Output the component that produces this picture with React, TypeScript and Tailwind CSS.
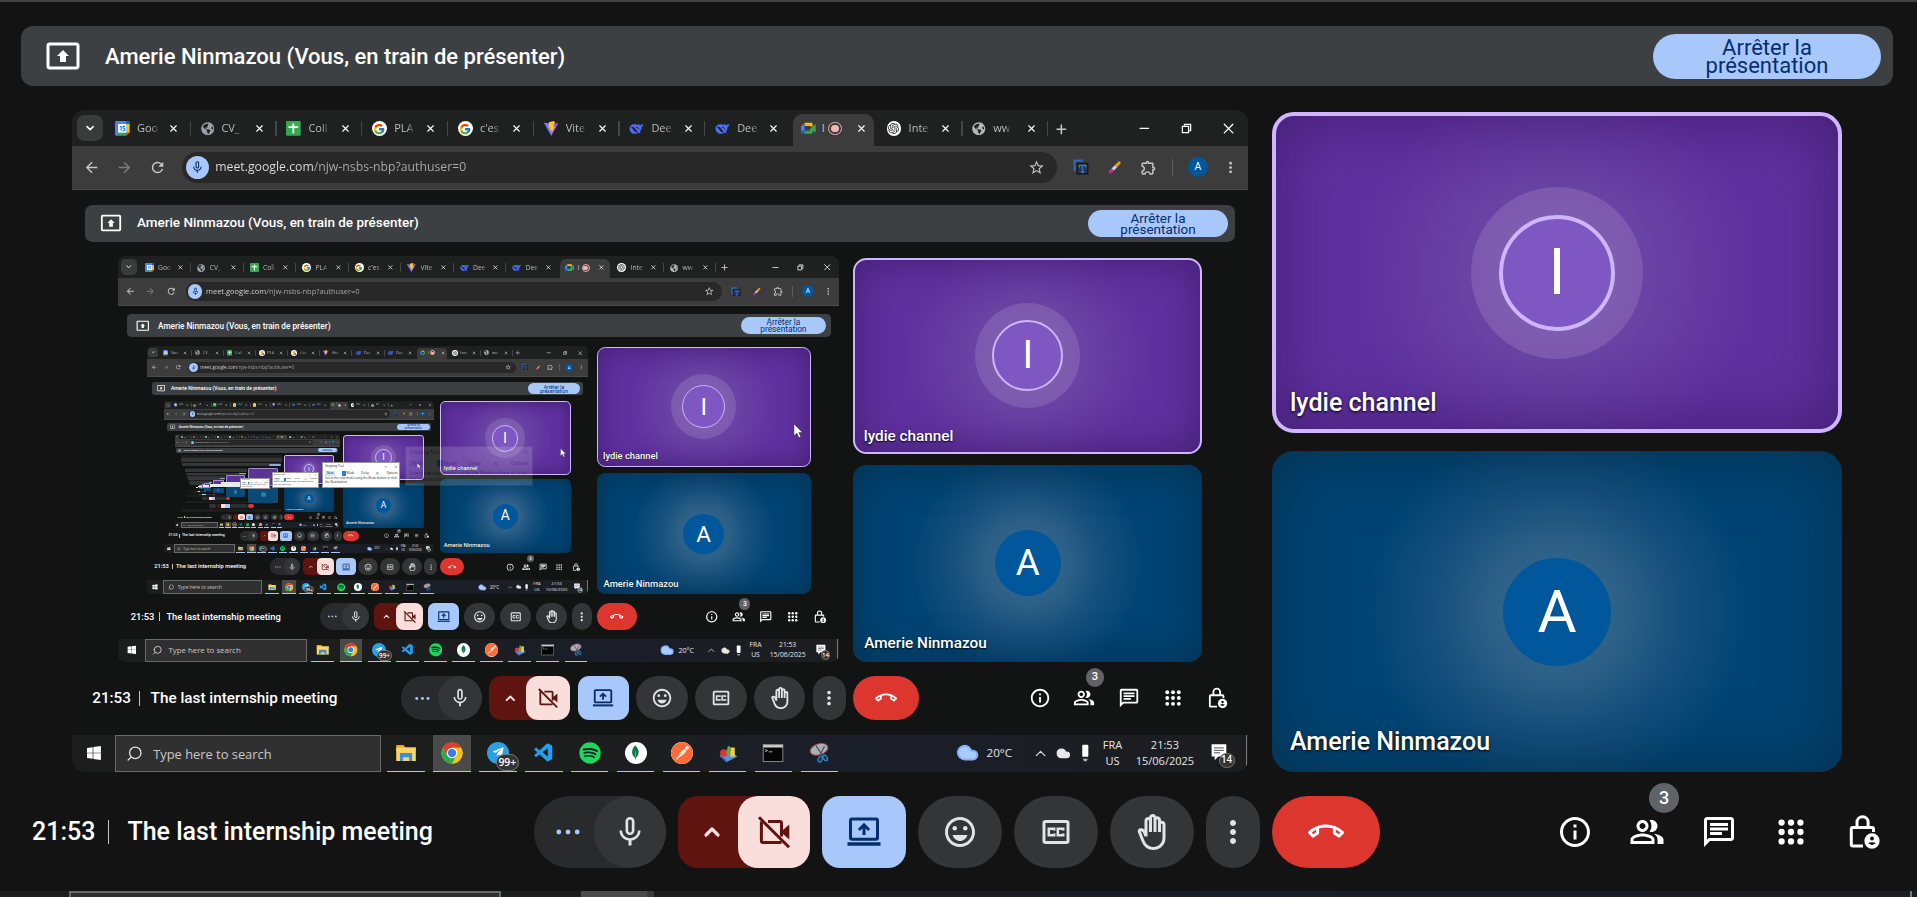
import type { ReactNode } from 'react';
import {
  MdArrowBack,
  MdArrowForward,
  MdMicNone,
  MdMoreVert,
  MdOutlineBackHand,
  MdOutlineCallEnd,
  MdOutlineChat,
  MdOutlineEmojiEmotions,
  MdOutlineExtension,
  MdOutlineInfo,
  MdOutlinePeopleAlt,
  MdRefresh,
  MdStarOutline,
} from 'react-icons/md';
import { FaGlobeAmericas, FaSpotify, FaTelegramPlane, FaWindows } from 'react-icons/fa';
import { FcGoogle } from 'react-icons/fc';
import { SiMongodb, SiOpenai, SiPostman } from 'react-icons/si';
import { VscVscode } from 'react-icons/vsc';
import { ChevronDown, ChevronUp, Cloud, Minus, Plus, Search, X } from 'lucide-react';

/* Desktops deeper than DETAIL_DEPTH are too small to read and are drawn as plain blocks. */
const DETAIL_DEPTH = 5;
const MAX_DEPTH = 10;

/* ---------- icons ---------- */

function PresentIcon({ className }: { className?: string }) {
  return (
    <svg viewBox="0 0 24 24" fill="currentColor" className={className} aria-hidden="true">
      <path d="M21 3H3c-1.11 0-2 .89-2 2v14c0 1.11.89 2 2 2h18c1.11 0 2-.89 2-2V5c0-1.11-.89-2-2-2zm0 16.02H3V4.98h18v14.04zM10 12H8l4-4 4 4h-2v4h-4v-4z" />
    </svg>
  );
}

function LaptopShareIcon({ className }: { className?: string }) {
  return (
    <svg viewBox="0 0 24 24" fill="none" stroke="currentColor" className={className} aria-hidden="true">
      <rect x="3" y="3.4" width="18" height="13.4" rx="1" strokeWidth="2" />
      <path d="M1 20h22" strokeWidth="2.2" />
      <path d="M12 14V8" strokeWidth="2" />
      <path d="M8.6 10.6 12 7.2l3.4 3.4" strokeWidth="1.9" />
    </svg>
  );
}

function CameraOffIcon({ className }: { className?: string }) {
  return (
    <svg viewBox="0 0 24 24" fill="none" stroke="currentColor" strokeWidth="2" className={className} aria-hidden="true">
      <path d="M3.6 5v13a1 1 0 0 0 1 1H17" />
      <path d="M8 5h8a1 1 0 0 1 1 1v9" />
      <path d="M17 11.5 22.2 7v10L17 12.5z" fill="currentColor" stroke="none" />
      <path d="M2 2.2 22 22.2" />
    </svg>
  );
}

function CaptionsIcon({ className }: { className?: string }) {
  return (
    <svg viewBox="0 0 24 24" fill="none" stroke="currentColor" className={className} aria-hidden="true">
      <rect x="4" y="5" width="16" height="14" rx="1" strokeWidth="2" />
      <path d="M10.8 11V9.8H7.2v4.4h3.6V13M16.8 11V9.800h-3.600v4.400h3.600V13" strokeWidth="1.7" />
    </svg>
  );
}

function DotsIcon({ className }: { className?: string }) {
  return (
    <svg viewBox="0 0 24 24" fill="currentColor" className={className} aria-hidden="true">
      <circle cx="5.5" cy="12" r="1.700" />
      <circle cx="12" cy="12" r="1.700" />
      <circle cx="18.5" cy="12" r="1.700" />
    </svg>
  );
}

const gridStops = [5.7, 12, 18.3];

function AppsIcon({ className }: { className?: string }) {
  return (
    <svg viewBox="0 0 24 24" fill="currentColor" className={className} aria-hidden="true">
      {gridStops.map((y) => gridStops.map((x) => <circle key={`${x}-${y}`} cx={x} cy={y} r="2.1" />))}
    </svg>
  );
}

function HostLockIcon({ className }: { className?: string }) {
  return (
    <svg viewBox="0 0 24 24" fill="none" stroke="currentColor" className={className} aria-hidden="true">
      <path d="M12 21.4H5.200a1 1 0 0 1-1-1V10a1 1 0 0 1 1-1H18a1 1 0 0 1 1 1v2" strokeWidth="2" />
      <path d="M8 9V5.500a3.700 3.700 0 0 1 7.400 0V9" strokeWidth="2" />
      <circle cx="18" cy="18" r="5.100" fill="currentColor" stroke="none" />
      <circle cx="18" cy="16.300" r="1.300" fill="#131313" stroke="none" />
      <path d="M15.400 19.400a3.400 1.800 0 0 1 5.200 0 3.400 3.400 0 0 1-5.200 0z" fill="#131313" stroke="none" />
    </svg>
  );
}

function RestoreIcon({ className }: { className?: string }) {
  return (
    <svg viewBox="0 0 16 16" fill="none" stroke="currentColor" strokeWidth="1.8" className={className} aria-hidden="true">
      <path d="M2 5h9v9H2z" />
      <path d="M5 4V2h9v9h-2" />
    </svg>
  );
}

function CalendarLogo() {
  return (
    <svg viewBox="0 0 24 24" className="size-6" aria-hidden="true">
      <path d="M0 2a2 2 0 0 1 2-2h17v5H0z" fill="#4285f4" />
      <path d="M0 5h5v19H2a2 2 0 0 1-2-2z" fill="#4285f4" />
      <path d="M19 0h3a2 2 0 0 1 2 2v3h-5z" fill="#1967d2" />
      <path d="M19 5h5v14h-5z" fill="#fbbc04" />
      <path d="M5 19h14v5H5z" fill="#34a853" />
      <path d="M19 19h5l-5 5z" fill="#ea4335" />
      <path d="M5 5h14v14H5z" fill="#fff" />
      <path d="M8 9h2v7M16.500 8.800h-3.300v2.800c3.700-.6 4.200 4 .3 4.200h-1" fill="none" stroke="#1a73e8" strokeWidth="1.700" />
    </svg>
  );
}

function SheetsLogo() {
  return (
    <svg viewBox="0 0 24 24" className="size-6" aria-hidden="true">
      <rect width="24" height="24" rx="2" fill="#34a853" />
      <path d="M12 4v16M4 10h16" stroke="#fff" strokeWidth="3" />
    </svg>
  );
}

function ViteLogo() {
  return (
    <svg viewBox="0 0 24 24" className="size-6" aria-hidden="true">
      <path d="M0 3 12 24 24 3 12 5z" fill="#a34dfb" />
      <path d="M0 3 12 24V5z" fill="#6a7bff" />
      <path d="m16 0-8 2-.6 9 3-.6-1 5 3-.8-.4 6 6-12-3.400.700L18 2z" fill="#ffc820" />
    </svg>
  );
}

function DeepSeekLogo() {
  return (
    <svg viewBox="0 0 24 24" className="size-6" aria-hidden="true">
      <path
        d="M23.500 5.500c-1 .4-1.800 0-2.600-.8-.5 1-.5 1.800-1.700 2.200-.8.200-1.500 0-2.200-.6-.7-.7-1.600-1.600-1.200-2.900-1.200 1.200-.6 3.200.6 4.300-3-2-9.300-3.800-13.400-.2C-1 11 .300 20.500 9.500 21c2.300.1 4.500-.6 6.200-1.900 1.400.9 3 .9 3.900.2-.9-.3-1.500-.9-1.800-1.700 2.300-2.700 2.900-5.500 2.800-8.200 1.700-.3 2.800-1.700 2.900-3.900z"
        fill="#4d6bfe"
      />
      <path d="M3.500 9.500c3.500-.5 7 2.500 8.500 5.500 1 2 2.500 3.300 3.800 3.600-4.300.6-6.800-1-8.300-3.800C6.500 12.800 5 11.500 3.500 11z" fill="#1f2020" />
      <path d="M11.500 10.500c1.800-.8 4.500.6 4.600 3.600" stroke="#1f2020" strokeWidth="1.500" fill="none" />
    </svg>
  );
}

function MeetLogo() {
  return (
    <svg viewBox="0 0 24 24" className="size-6" aria-hidden="true">
      <path d="M6 3h11a2 2 0 0 1 2 2v4h-4V8H6z" fill="#fbbc04" />
      <path d="M6 3v5H0z" fill="#ea4335" />
      <path d="M0 8h6v8H0z" fill="#4285f4" />
      <path d="M0 16h6v5H2a2 2 0 0 1-2-2z" fill="#1967d2" />
      <path d="M6 16h8v-2l5-5 5-4v14l-5-3v3a2 2 0 0 1-2 2H6z" fill="#34a853" />
    </svg>
  );
}

function ChromeLogo() {
  return (
    <svg viewBox="0 0 48 48" className="size-9" aria-hidden="true">
      <circle cx="24" cy="24" r="23" fill="#fbc116" />
      <path d="M4.080 12.500A23 23 0 0 1 43.920 12.500H24L14 29.800z" fill="#e33b2e" />
      <path d="M4.080 12.500A23 23 0 0 0 24 47L34 29.750 14 29.750z" fill="#2da94f" />
      <path d="M24 12.500h19.920A23 23 0 0 1 24 47l10-17.250z" fill="#fbc116" />
      <circle cx="24" cy="24" r="11.500" fill="#fff" />
      <circle cx="24" cy="24" r="9" fill="#3a7cec" />
    </svg>
  );
}

function ExplorerLogo() {
  return (
    <svg viewBox="0 0 36 36" className="size-9" aria-hidden="true">
      <path d="M2 5h12l3 4h17v6H2z" fill="#e8a824" />
      <path d="M2 9h32v22H2z" fill="#fcd462" />
      <path d="M8 18h20v13h-5v-6H13v6H8z" fill="#3b8fd8" />
    </svg>
  );
}

function ChartsLogo() {
  return (
    <svg viewBox="0 0 36 36" className="size-9" aria-hidden="true">
      <path d="m4 22 20-8 9 10-18 9z" fill="#5b8fe0" />
      <path d="m4 22 11 11v-4z" fill="#2f5cab" />
      <circle cx="11" cy="18" r="6" fill="#e0342c" />
      <path d="m15 18 3-12 4 2-2 14z" fill="#58b53c" />
      <path d="M22 9h7v15h-7z" fill="#f2cf3a" />
    </svg>
  );
}

function TerminalLogo() {
  return (
    <svg viewBox="0 0 36 36" className="size-9" aria-hidden="true">
      <rect x="2" y="4" width="32" height="28" fill="#050505" stroke="#8f8f8f" strokeWidth="1.500" />
      <path d="M2 5h32v4H2z" fill="#cfcfcf" />
      <path d="m5 12 4 2-4 2M11 16h6" stroke="#d0d0d0" strokeWidth="1.300" fill="none" />
    </svg>
  );
}

function SnipLogo() {
  return (
    <svg viewBox="0 0 36 36" className="size-9" aria-hidden="true">
      <ellipse cx="18" cy="12" rx="15" ry="9" transform="rotate(-18 18 12)" fill="#a9afb5" stroke="#a04444" strokeWidth="1.500" />
      <path d="m13 6 10 15M27 7l-8 15" stroke="#4e5459" strokeWidth="2" />
      <ellipse cx="20" cy="28" rx="3" ry="5" transform="rotate(25 20 28)" fill="none" stroke="#2c7fb8" strokeWidth="2.500" />
      <ellipse cx="28" cy="26" rx="3" ry="5" transform="rotate(-35 28 26)" fill="none" stroke="#2c7fb8" strokeWidth="2.500" />
    </svg>
  );
}

function TranslateLogo() {
  return (
    <svg viewBox="0 0 30 30" className="size-[26px]" aria-hidden="true">
      <path d="M1 1h18v4H5v18H1z" fill="#2f62c4" />
      <path d="M8 8h20v20H8z" fill="#2d3648" stroke="#101010" strokeWidth="2" />
      <path d="M12 12h12v4M12 12v4M18 12v13M15 25h6" stroke="#3b73dd" strokeWidth="2.500" fill="none" />
    </svg>
  );
}

function BrushLogo() {
  return (
    <svg viewBox="0 0 26 26" className="size-6" aria-hidden="true">
      <path d="m14 9 6-6c2-2 5 0 4 3l-6 7z" fill="#f7931e" />
      <path d="m8 15 6-6 4 4-6 6z" fill="#b8d4f0" />
      <path d="M3 24c0-4 1-7 5-9l4 4c-2 4-5 5-9 5z" fill="#c2327a" />
    </svg>
  );
}

/* ---------- browser window ---------- */

function GoogleBadge() {
  return (
    <span className="flex size-6 items-center justify-center rounded-full bg-white">
      <FcGoogle className="size-5" />
    </span>
  );
}

const tabs: { title: string; icon: ReactNode; active?: boolean }[] = [
  { title: 'Goo', icon: <CalendarLogo /> },
  { title: 'CV_', icon: <FaGlobeAmericas className="size-[22px] text-[#9aa0a6]" /> },
  { title: 'Coll', icon: <SheetsLogo /> },
  { title: 'PLA', icon: <GoogleBadge /> },
  { title: "c'es", icon: <GoogleBadge /> },
  { title: 'Vite', icon: <ViteLogo /> },
  { title: 'Dee', icon: <DeepSeekLogo /> },
  { title: 'Dee', icon: <DeepSeekLogo /> },
  { title: 'I', icon: <MeetLogo />, active: true },
  {
    title: 'Inte',
    icon: (
      <span className="flex size-6 items-center justify-center rounded-full bg-white">
        <SiOpenai className="size-[18px] text-[#222]" />
      </span>
    ),
  },
  { title: 'ww', icon: <FaGlobeAmericas className="size-[22px] text-[#b8b8b8]" /> },
];

function TabStrip() {
  return (
    <div className="flex h-[58px] shrink-0 items-end bg-[#1f2120] pl-2 text-[#c7c7c7]">
      <button aria-label="Search tabs" className="mb-2 flex size-[42px] items-center justify-center rounded-xl bg-[#3a3b3b]">
        <ChevronDown className="size-5 text-white" strokeWidth={3} />
      </button>
      <div className="flex pl-1">
        {tabs.map((tab, i) =>
          tab.active ? (
            <div key={i} className="mr-1 ml-1 flex h-[51px] w-[132px] items-center rounded-t-2xl bg-[#3c3c3c] px-3 pb-1">
              {tab.icon}
              <span className="ml-2.5 text-[18px]">{tab.title}</span>
              <span className="ml-1.5 flex size-[22px] items-center justify-center rounded-full border-2 border-[#e8b4ae]">
                <span className="size-3 rounded-full bg-[#f2b8b5]" />
              </span>
              <button aria-label="Close tab" className="ml-auto text-white">
                <X className="size-[18px]" strokeWidth={2.5} />
              </button>
            </div>
          ) : (
            <div key={i} className="flex h-[51px] w-[140px] items-center pb-1 pl-4">
              {tab.icon}
              <span className="ml-3 bg-[linear-gradient(90deg,#c7c7c7_65%,#c7c7c740)] bg-clip-text text-[18px] whitespace-nowrap text-transparent">
                {tab.title}
              </span>
              <button aria-label="Close tab" className="ml-auto text-white">
                <X className="size-[18px]" strokeWidth={2.5} />
              </button>
              <span className={tabs[i + 1]?.active ? 'ml-[17px] w-[2px]' : 'ml-[17px] h-6 w-[2px] bg-[#454746]'} />
            </div>
          ),
        )}
      </div>
      <button aria-label="New tab" className="mb-[15px] ml-[10px]">
        <Plus className="size-6" strokeWidth={2.5} />
      </button>
      <div className="mb-[14px] ml-auto flex items-center gap-[47px] pr-[17px] text-white">
        <button aria-label="Minimize">
          <Minus className="size-6" strokeWidth={2} />
        </button>
        <button aria-label="Restore">
          <RestoreIcon className="size-[18px]" />
        </button>
        <button aria-label="Close window">
          <X className="size-7" strokeWidth={1.8} />
        </button>
      </div>
    </div>
  );
}

function AddressBar() {
  return (
    <div className="flex h-[71px] shrink-0 items-center bg-[#3c3c3c] pr-[14px] pl-[18px] text-[#c7c7c7]">
      <button aria-label="Back">
        <MdArrowBack className="size-7" />
      </button>
      <button aria-label="Forward" className="ml-[26px] text-[#7d7d7d]">
        <MdArrowForward className="size-7" />
      </button>
      <button aria-label="Reload" className="ml-[26px]">
        <MdRefresh className="size-7" />
      </button>
      <div className="ml-[26px] flex h-[51px] flex-1 items-center rounded-full bg-[#282828] pr-5 pl-1.5">
        <span className="flex size-[38px] items-center justify-center rounded-full bg-[#a8c7fa] text-[#062e6f]">
          <MdMicNone className="size-6" />
        </span>
        <input
          aria-label="Address"
          readOnly
          value="meet.google.com/njw-nsbs-nbp?authuser=0"
          className="ml-2.5 min-w-0 flex-1 bg-[linear-gradient(90deg,#e3e3e3_162px,#adadad_162px)] bg-clip-text text-[20px] text-transparent outline-none"
        />
        <button aria-label="Bookmark">
          <MdStarOutline className="size-7" />
        </button>
      </div>
      <div className="ml-[26px] flex items-center gap-[30px]">
        <TranslateLogo />
        <BrushLogo />
        <MdOutlineExtension className="size-7" />
      </div>
      <div className="ml-6 flex items-center gap-6">
        <span className="h-7 w-[2px] bg-[#5c5c5c]" />
        <span className="flex size-8 items-center justify-center rounded-full bg-[#01579b] font-[Roboto] text-[17px] text-white">A</span>
        <button aria-label="Menu">
          <MdMoreVert className="size-7" />
        </button>
      </div>
    </div>
  );
}

/* ---------- Windows taskbar ---------- */

const underline = 'flex h-full w-[61px] items-center justify-center border-b-3 border-[#a9c7f2]';

function Taskbar() {
  return (
    <div className="flex h-[60px] shrink-0 items-stretch bg-[linear-gradient(90deg,#1c1d1d_45%,#1a1e2a_65%,#1c1d1f)] text-[#e6e6e6]">
      <button aria-label="Start" className="flex w-[71px] items-center justify-center">
        <FaWindows className="size-[26px] text-white" />
      </button>
      <label className="flex w-[433px] items-center border-2 border-[#6a6a6a] bg-[#303030] pl-4">
        <Search className="size-7 -scale-x-100" strokeWidth={1.8} />
        <input
          aria-label="Type here to search"
          placeholder="Type here to search"
          className="ml-4 min-w-0 flex-1 bg-transparent pt-1 text-[21px] outline-none placeholder:text-[#c9c9c9]"
        />
      </label>
      <div className="ml-[11px] flex gap-[14px]">
        <span className={underline}>
          <ExplorerLogo />
        </span>
        <span className="flex h-full w-[61px] items-center justify-center border-b-3 border-[#a9c7f2] bg-[#4a4a4a]">
          <ChromeLogo />
        </span>
        <span className={`${underline} relative`}>
          <span className="flex size-9 items-center justify-center rounded-full bg-[#2aa1e0]">
            <FaTelegramPlane className="size-5 text-white" />
          </span>
          <span className="absolute right-[-4px] bottom-0 rounded-full border border-[#777] bg-[#333] px-[3px] text-[17px] leading-6 font-semibold text-white">
            99+
          </span>
        </span>
        <span className={underline}>
          <VscVscode className="size-9 text-[#22a0ee]" />
        </span>
        <span className={underline}>
          <FaSpotify className="size-9 text-[#1ed760]" />
        </span>
        <span className={underline}>
          <span className="flex size-9 items-center justify-center rounded-full bg-white">
            <SiMongodb className="size-6 text-[#13794a]" />
          </span>
        </span>
        <span className={underline}>
          <SiPostman className="size-9 rounded-full bg-white text-[#ff6c37]" />
        </span>
        <span className={underline}>
          <ChartsLogo />
        </span>
        <span className={underline}>
          <TerminalLogo />
        </span>
        <span className={underline}>
          <SnipLogo />
        </span>
      </div>
      <div className="ml-auto flex items-center pr-[22px] text-[19px] leading-[27px]">
        <Cloud className="size-[38px] fill-[#a9cbff] text-[#84b1f5]" />
        <span className="ml-3">20°C</span>
        <ChevronUp className="ml-8 size-7" strokeWidth={1.6} />
        <Cloud className="ml-3 size-6 fill-[#e8e8e8]" />
        <svg viewBox="0 0 14 30" className="ml-4 h-[30px] w-[14px]" aria-hidden="true">
          <rect x="2" y="1" width="10" height="20" rx="2" fill="#fff" />
          <path d="M3 24h8l-2 4H5z" fill="#b5b5b5" />
        </svg>
        <span className="ml-[22px] flex flex-col items-center text-[18px]">
          <span>FRA</span>
          <span>US</span>
        </span>
        <span className="ml-[22px] flex flex-col items-center text-[18px]">
          <span>21:53</span>
          <span>15/06/2025</span>
        </span>
        <span className="relative ml-7 size-[34px]">
          <svg viewBox="0 0 34 34" className="size-[34px]" aria-hidden="true">
            <path d="M1 2h24v20H12l-6 6v-6H1z" fill="#fff" />
            <path d="M5 8h16M5 12h16M5 16h10" stroke="#444" strokeWidth="1.500" />
          </svg>
          <span className="absolute right-[-4px] bottom-[-8px] flex size-[26px] items-center justify-center rounded-full border border-[#777] bg-[#333] text-[16px] font-semibold text-white">
            14
          </span>
        </span>
      </div>
      <span className="mr-[2px] h-[52px] w-[2px] bg-[#7a7a7a]" />
    </div>
  );
}

/* ---------- meeting page ---------- */

function PresentingBanner() {
  return (
    <header className="mx-[21px] flex h-[60px] shrink-0 items-center rounded-xl bg-[#3c4043] pr-3 pl-6 text-white">
      <PresentIcon className="size-9" />
      <p className="ml-6 text-[22px] font-medium">Amerie Ninmazou (Vous, en train de présenter)</p>
      <button className="ml-auto flex h-[45px] w-[228px] items-center justify-center rounded-full bg-[#a8c7fa] px-12 pt-[2px] text-center text-[22px] leading-[18px] text-[#062e6f]">
        Arrêter la présentation
      </button>
    </header>
  );
}

function SpeakerTile() {
  return (
    <article className="flex flex-1 flex-col rounded-[22px] border-4 border-[#cfb4ff] bg-[radial-gradient(circle,#7550a8_0,#6841a3_100px,#5f319f_200px)] shadow-[inset_0_0_70px_#35165fb0]">
      <div className="flex flex-1 items-center justify-center">
        <div className="-mb-[46px] flex size-[172px] items-center justify-center rounded-full bg-white/12">
          <div className="flex size-[116px] items-center justify-center rounded-full border-4 border-[#cfb4ff] bg-[#7e57c2] text-[64px] leading-none text-white">
            I
          </div>
        </div>
      </div>
      <h2 className="px-[14px] pb-[6px] text-[25px] leading-10 font-medium text-white [text-shadow:0_1px_3px_#000]">lydie channel</h2>
    </article>
  );
}

function SelfTile() {
  return (
    <article className="flex flex-1 flex-col rounded-[22px] bg-[radial-gradient(circle,#3b6c90_0,#2b5f86_70px,#17507d_120px,#004474_190px)] p-1 shadow-[inset_0_0_70px_#062a44c0]">
      <div className="flex flex-1 items-center justify-center">
        <div className="-mb-[46px] flex size-[108px] items-center justify-center rounded-full bg-[#01579b] text-[60px] leading-none text-white">
          A
        </div>
      </div>
      <h2 className="px-[14px] pb-[6px] text-[25px] leading-10 font-medium text-white [text-shadow:0_1px_3px_#000]">Amerie Ninmazou</h2>
    </article>
  );
}

const round = 'flex h-[72px] w-[84px] items-center justify-center rounded-full bg-[#333537] text-[#e3e3e3]';

function ControlBar() {
  return (
    <footer className="grid flex-1 grid-cols-[1fr_auto_1fr] items-center">
      <div className="flex items-center pl-8 text-[25px] font-medium text-white">
        <time>21:53</time>
        <span className="mr-[18px] ml-[13px] h-6 w-px bg-[#c4c7c5]" />
        <span>The last internship meeting</span>
      </div>
      <div className="flex gap-3">
        <div className="flex rounded-[36px] bg-[#282a2c]">
          <button aria-label="Audio settings" className="flex w-[60px] items-center justify-center pl-2 text-[#a8c7fa]">
            <DotsIcon className="size-[34px]" />
          </button>
          <button aria-label="Turn off microphone" className="flex size-[72px] items-center justify-center rounded-full bg-[#333537] text-[#e3e3e3]">
            <MdMicNone className="size-9" />
          </button>
        </div>
        <div className="flex rounded-[20px] bg-[#601410]">
          <button aria-label="Video settings" className="flex w-[60px] items-center justify-center pl-2 text-[#f9dedc]">
            <ChevronUp className="size-6" strokeWidth={3.2} />
          </button>
          <button aria-label="Turn on camera" className="flex size-[72px] items-center justify-center rounded-[20px] bg-[#f9dedc] text-[#601410]">
            <CameraOffIcon className="size-9" />
          </button>
        </div>
        <button aria-label="Present" className="flex h-[72px] w-[84px] items-center justify-center rounded-[18px] bg-[#a8c7fa] text-[#062e6f]">
          <LaptopShareIcon className="size-9" />
        </button>
        <button aria-label="Send a reaction" className={round}>
          <MdOutlineEmojiEmotions className="size-9" />
        </button>
        <button aria-label="Turn on captions" className={round}>
          <CaptionsIcon className="size-9" />
        </button>
        <button aria-label="Raise hand" className={round}>
          <MdOutlineBackHand className="size-9" />
        </button>
        <button aria-label="More options" className="flex h-[72px] w-[54px] items-center justify-center rounded-full bg-[#333537] text-[#e3e3e3]">
          <MdMoreVert className="size-9" />
        </button>
        <button aria-label="Leave call" className="flex h-[72px] w-[108px] items-center justify-center rounded-full bg-[#dc362e] text-white">
          <MdOutlineCallEnd className="size-9" />
        </button>
      </div>
      <div className="flex items-center justify-end gap-9 pr-[33px] text-white">
        <button aria-label="Meeting details">
          <MdOutlineInfo className="size-9" />
        </button>
        <button aria-label="People" className="relative">
          <MdOutlinePeopleAlt className="size-9" />
          <span className="absolute -top-[31px] left-5 flex size-[30px] items-center justify-center rounded-full bg-[#5f6368] text-[18px] font-medium">
            3
          </span>
        </button>
        <button aria-label="Chat">
          <MdOutlineChat className="size-9" />
        </button>
        <button aria-label="Activities">
          <AppsIcon className="size-9" />
        </button>
        <button aria-label="Host controls">
          <HostLockIcon className="size-9" />
        </button>
      </div>
    </footer>
  );
}

function MeetingPage({ depth }: { depth: number }) {
  return (
    <main className="flex min-h-0 flex-1 flex-col pt-6 font-[Roboto,sans-serif]">
      <PresentingBanner />
      <section className="mt-6 flex shrink-0 justify-center gap-6">
        <div className="h-[662px] w-[1176px] overflow-hidden rounded-xl bg-[#111413]">
          {depth < DETAIL_DEPTH ? <SharedDesktop depth={depth + 1} /> : <DistantDesktop depth={depth + 1} />}
        </div>
        <div className="flex w-[570px] flex-col gap-[18px] pt-[2px]">
          <SpeakerTile />
          <SelfTile />
        </div>
      </section>
      <ControlBar />
    </main>
  );
}

/* ---------- shared screen ---------- */

function SnippingTool({ faded }: { faded: boolean }) {
  return (
    <div
      className={`absolute top-[506px] left-[765px] w-[340px] border border-[#999] bg-white px-2 text-[13px] text-[#222] ${faded ? 'opacity-15' : ''}`}
    >
      <div className="flex h-7 items-center justify-between">
        <span>Snipping Tool</span>
        <span className="flex gap-7">
          <Minus className="size-4" />
          <X className="size-4" />
        </span>
      </div>
      <div className="flex h-8 items-center justify-between">
        <span className="bg-[#cde6f9] px-2">New</span>
        <span className="border-l-[18px] border-[#1b86d6] pl-1">Mode</span>
        <span>Delay</span>
        <X className="size-5" />
        <span>Options</span>
      </div>
      <p className="h-[42px] leading-4">Select the snip mode using the Mode button or click the New button.</p>
    </div>
  );
}

function Cursor() {
  return (
    <svg viewBox="0 0 12 19" className="absolute top-[445px] left-[1798px] h-11 w-7" aria-hidden="true">
      <path d="M1 1v14l3.400-3.200L6.700 17l2.300-1-2.300-5H11z" fill="#fff" stroke="#222" strokeWidth="0.600" />
    </svg>
  );
}

function SharedDesktop({ depth }: { depth: number }) {
  return (
    <div className="relative flex h-[1080px] w-[1920px] flex-col bg-[#111413] font-['Open_Sans','Noto_Sans',sans-serif] [zoom:0.6125]">
      <TabStrip />
      <AddressBar />
      <div className="h-[2px] shrink-0 bg-[#4a4b4b]" />
      <div className="flex min-h-0 flex-1 flex-col pl-[1px]">
        <MeetingPage depth={depth} />
      </div>
      <Taskbar />
      {depth > 1 && <SnippingTool faded={depth === 2} />}
      {depth > 1 && <Cursor />}
    </div>
  );
}

function DistantDesktop({ depth }: { depth: number }) {
  return (
    <div aria-hidden="true" className="relative flex h-[1080px] w-[1920px] flex-col bg-[#111413] [zoom:0.6125]">
      <div className="h-[58px] bg-[#1f2120]" />
      <div className="h-[73px] bg-[#333434]" />
      <div className="mx-[21px] mt-6 flex h-[60px] items-center justify-end rounded-xl bg-[#34383a] pr-3">
        <span className="h-[45px] w-[228px] rounded-full bg-[#8fabd8]" />
      </div>
      <div className="mt-6 flex justify-center gap-6">
        <div className="h-[662px] w-[1176px] overflow-hidden bg-[#111413]">
          {depth < MAX_DEPTH && <DistantDesktop depth={depth + 1} />}
        </div>
        <div className="flex w-[570px] flex-col gap-[18px]">
          <div className="flex-1 rounded-[22px] border-4 border-[#a58bd0] bg-[#5b3496]" />
          <div className="flex flex-1 items-center justify-center rounded-[22px] bg-[#0c4a76]">
            <span className="size-[108px] rounded-full bg-[#2f79b8]" />
          </div>
        </div>
      </div>
      <div className="flex flex-1 items-center justify-center gap-3">
        <span className="h-[72px] w-[132px] rounded-full bg-[#333537]" />
        <span className="h-[72px] w-[60px] bg-[#601410]" />
        <span className="h-[72px] w-[72px] bg-[#f9dedc]" />
        <span className="h-[72px] w-[84px] bg-[#a8c7fa]" />
        <span className="h-[72px] w-[330px] rounded-full bg-[#2c2f30]" />
        <span className="h-[72px] w-[108px] rounded-full bg-[#dc362e]" />
      </div>
      <div className="h-[60px] bg-[#1c1d1d]" />
      <span className="absolute top-[506px] left-[765px] h-[103px] w-[344px] bg-[#e4ebf0]" />
    </div>
  );
}

function TaskbarEdge() {
  return (
    <div className="flex h-[6px] shrink-0 overflow-hidden bg-[linear-gradient(90deg,#1c1d1d_45%,#1a1e2a_65%,#1c1d1f)]">
      <span className="ml-[69px] w-[432px] border-2 border-b-0 border-[#6a6a6a] bg-[#303030]" />
      <span className="ml-[80px] w-[66px] bg-[#4a4a4a]" />
      <span className="w-[7px] bg-[#3a3a3a]" />
      <span className="mr-[5px] ml-auto w-[2px] bg-[#7a7a7a]" />
    </div>
  );
}

export default function App() {
  return (
    <div className="flex h-screen min-h-[897px] flex-col overflow-hidden border-t-2 border-[#3f4040] bg-[#131313]">
      <div className="flex min-h-0 flex-1 flex-col pr-[3px]">
        <MeetingPage depth={0} />
      </div>
      <TaskbarEdge />
    </div>
  );
}
